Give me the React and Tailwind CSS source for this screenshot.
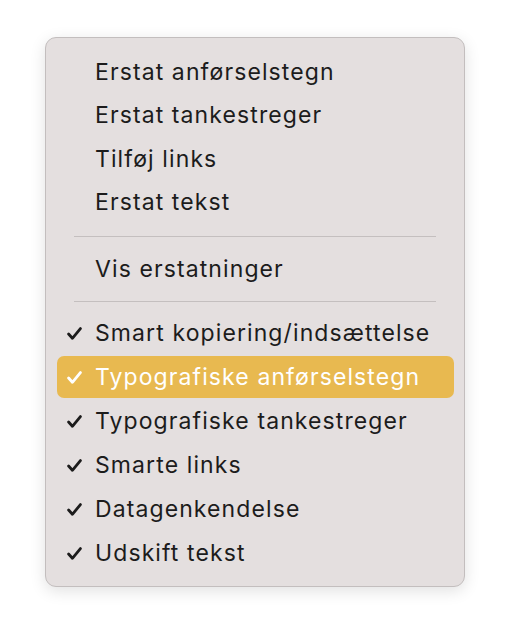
import React from 'react';

const TOP_ITEMS = ['Erstat anførselstegn', 'Erstat tankestreger', 'Tilføj links', 'Erstat tekst'];

const CHECK_ITEMS = [
  { label: 'Smart kopiering/indsættelse' },
  { label: 'Typografiske anførselstegn', active: true },
  { label: 'Typografiske tankestreger' },
  { label: 'Smarte links' },
  { label: 'Datagenkendelse' },
  { label: 'Udskift tekst' },
];

const Check = ({ className }) => (
  <svg viewBox="0 0 15 13" className={className} fill="none">
    <path d="M1.6 7 L5.4 11.3 L13.4 1.6" stroke="currentColor" strokeWidth="2.8" strokeLinecap="round" strokeLinejoin="round" />
  </svg>
);

const Separator = ({ h }) => (
  <div className={`flex items-center px-[28px] ${h}`}>
    <div className="h-px w-full bg-[#c4bfbf]"></div>
  </div>
);

export default function App() {
  return (
    <div className="w-[510px] h-[640px] bg-white pt-[37px] pl-[45px]" style={{ fontFamily: 'Inter, "Liberation Sans", sans-serif' }}>
      <div className="w-[420px] h-[550px] rounded-[11px] border border-[#c3bebe] bg-[#e4dfdf] pt-[12px] shadow-[0_4px_16px_rgba(0,0,0,0.12)] text-[23px] tracking-[1.1px]">
        {TOP_ITEMS.map((label) => (
          <div key={label} className="h-[43.5px] flex items-center pl-[49px] text-[#1c1c1c]">
            {label}
          </div>
        ))}
        <Separator h="h-[24px]" />
        <div className="h-[43px] flex items-center pl-[49px] text-[#1c1c1c]">Vis erstatninger</div>
        <Separator h="h-[20px]" />
        {CHECK_ITEMS.map((item) => (
          <div key={item.label} className="h-[44px] pl-[11px] pr-[10px] pt-px pb-0">
            <div
              className={`h-[42px] flex items-center rounded-[7px] pl-[10px] ${
                item.active ? 'bg-[#e8b950] text-white' : 'text-[#1c1c1c]'
              }`}
            >
              <Check className="w-[15px] h-[13px] mr-[13px]" />
              <span>{item.label}</span>
            </div>
          </div>
        ))}
      </div>
    </div>
  );
}
